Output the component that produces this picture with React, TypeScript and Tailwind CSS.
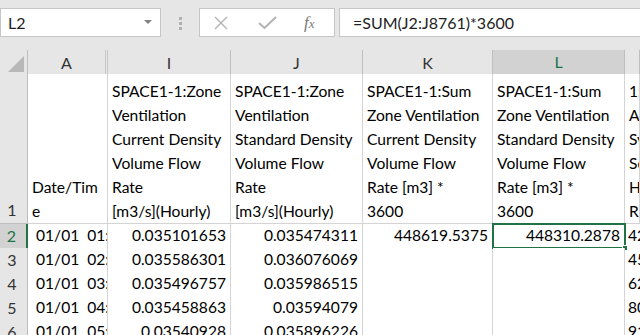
import React from "react";

type DataRow = {
  n: number;
  a: string;
  i: string;
  j: string;
  k: string;
  l: string;
  m: string;
};

const cols = ["", "A", "I", "J", "K", "L", ""];

const titleLines: string[][] = [
  ["Date/Tim", "e"],
  ["SPACE1-1:Zone", "Ventilation", "Current Density", "Volume Flow", "Rate", "[m3/s](Hourly)"],
  ["SPACE1-1:Zone", "Ventilation", "Standard Density", "Volume Flow", "Rate", "[m3/s](Hourly)"],
  ["SPACE1-1:Sum", "Zone Ventilation", "Current Density", "Volume Flow", "Rate [m3] *", "3600"],
  ["SPACE1-1:Sum", "Zone Ventilation", "Standard Density", "Volume Flow", "Rate [m3] *", "3600"],
  ["SPACE1-", "1:", "Air", "System", "Sensible", "Heating", "Rate"],
];

const rows: DataRow[] = [
  { n: 2, a: "01/01  01:00:00", i: "0.035101653", j: "0.035474311", k: "448619.5375", l: "448310.2878", m: "4218.5" },
  { n: 3, a: "01/01  02:00:00", i: "0.035586301", j: "0.036076069", k: "", l: "", m: "4531.2" },
  { n: 4, a: "01/01  03:00:00", i: "0.035496757", j: "0.035986515", k: "", l: "", m: "6234.8" },
  { n: 5, a: "01/01  04:00:00", i: "0.035458863", j: "0.03594079", k: "", l: "", m: "8012.5" },
  { n: 6, a: "01/01  05:00:00", i: "0.03540928", j: "0.035896226", k: "", l: "", m: "9123.4" },
];

const gridCols = "grid grid-cols-[28px_80px_123px_132px_130px_132px_1fr]";

function Toolbar() {
  return (
    <div className="flex h-[50px] items-start pt-[8px]">
      {/* name box */}
      <div className="flex h-[29px] w-[161px] items-center justify-between border border-[#c6c6c6] bg-white pl-[7px] pr-[8px] text-[16px] text-[#222]">
        <span>L2</span>
        <svg width="8" height="5" viewBox="0 0 8 5">
          <path d="M0 0 H8 L4 4 Z" fill="#808080" />
        </svg>
      </div>
      <div className="flex w-[38px] flex-col items-center gap-[2px] pt-[9px]">
        <span className="h-[3px] w-[3px] bg-[#b0b0b0]" />
        <span className="h-[3px] w-[3px] bg-[#b0b0b0]" />
        <span className="h-[3px] w-[3px] bg-[#b0b0b0]" />
      </div>
      {/* cancel / enter / fx */}
      <div className="flex h-[29px] w-[136px] items-center border border-[#c6c6c6] bg-white pl-[13px]">
        <svg width="16" height="14" viewBox="0 0 16 14">
          <path d="M2 1 L14 13 M14 1 L2 13" stroke="#b3b3b3" strokeWidth="1.4" />
        </svg>
        <svg className="ml-[29px]" width="19" height="13" viewBox="0 0 19 13">
          <path d="M1 7 L6.5 12 L18 1" stroke="#b3b3b3" strokeWidth="2" fill="none" />
        </svg>
        <span className="ml-[27px] font-['Liberation_Serif',serif] text-[17px] italic text-[#7a7a7a]">
          f<span className="text-[13px]">x</span>
        </span>
      </div>
      <div className="ml-[4px] flex h-[29px] flex-1 items-center border border-[#c6c6c6] border-r-0 bg-white pl-[13px] text-[16px] text-[#222]">
        =SUM(J2:J8761)*3600
      </div>
    </div>
  );
}

function ColumnHeaders() {
  return (
    <div className={`${gridCols} h-[24px]`}>
      {cols.map((c, idx) => {
        const selected = c === "L";
        const base =
          "flex items-center justify-center border-b border-r border-[#bfbfbf] text-[16px]";
        if (idx === 0) {
          return (
            <div key={idx} className={`${base} bg-[#e6e6e6]`}>
              <svg width="18" height="18" viewBox="0 0 18 18" className="ml-[4px] mt-[2px]">
                <path d="M17 1 V17 H1 Z" fill="#b8b8b8" />
              </svg>
            </div>
          );
        }
        return (
          <div
            key={idx}
            className={`${base} ${
              selected
                ? "border-b-2 border-b-[#217346] bg-[#d2d2d2] text-[#217346]"
                : "bg-[#e6e6e6] text-[#333]"
            } ${c === "A" ? "border-r-[3px] border-r-[#c8c8c8] border-double" : ""}`}
          >
            {c}
          </div>
        );
      })}
    </div>
  );
}

function TitleRow() {
  return (
    <div className={`${gridCols} h-[150px]`}>
      <div className="flex items-end justify-center border-b border-r border-[#bfbfbf] bg-[#e6e6e6] pb-[1px] pr-[3px] text-[16px] leading-[24px] text-[#333]">
        1
      </div>
      {titleLines.map((lines, idx) => (
        <div
          key={idx}
          className="flex flex-col justify-end overflow-hidden whitespace-nowrap border-b border-r border-[#d4d4d4] bg-white pl-[4px] leading-[24px]"
        >
          {lines.map((t, k) => (
            <div key={k}>{t}</div>
          ))}
        </div>
      ))}
    </div>
  );
}

function Cell({ v, right }: { v: string; right?: boolean }) {
  return (
    <div
      className={`overflow-hidden whitespace-pre border-b border-r border-[#d4d4d4] bg-white leading-[23px] ${
        right ? "pr-[4px] text-right" : "pl-[8px]"
      }`}
    >
      {v}
    </div>
  );
}

function DataRows() {
  return (
    <>
      {rows.map((r) => {
        const active = r.n === 2;
        return (
          <div key={r.n} className={`${gridCols} h-[24px]`}>
            <div
              className={`flex items-center justify-center border-b border-[#c8c8c8] pr-[3px] text-[16px] ${
                active
                  ? "border-r-2 border-r-[#217346] bg-[#d2d2d2] text-[#217346]"
                  : "border-r border-r-[#bfbfbf] bg-[#e6e6e6] text-[#333]"
              }`}
            >
              {r.n}
            </div>
            <Cell v={r.a} />
            <Cell v={r.i} right />
            <Cell v={r.j} right />
            <Cell v={r.k} right />
            <div className="relative whitespace-nowrap border-b border-r border-[#d4d4d4] bg-white pr-[4px] text-right leading-[23px]">
              {r.l}
              {active && (
                <div className="absolute -left-[1px] -top-[1px] h-[26px] w-[134px] border-2 border-[#217346]">
                  <span className="absolute -bottom-[4px] -right-[4px] h-[6px] w-[6px] border border-white bg-[#217346]" />
                </div>
              )}
            </div>
            <div className="overflow-hidden whitespace-nowrap border-b border-[#d4d4d4] bg-white pl-[3px] leading-[23px]">
              {r.m}
            </div>
          </div>
        );
      })}
    </>
  );
}

export default function App() {
  return (
    <div className="h-[335px] w-[640px] overflow-hidden bg-[#e6e6e6] font-['Lato',sans-serif] text-[15.6px] text-black">
      <Toolbar />
      <ColumnHeaders />
      <TitleRow />
      <DataRows />
    </div>
  );
}
